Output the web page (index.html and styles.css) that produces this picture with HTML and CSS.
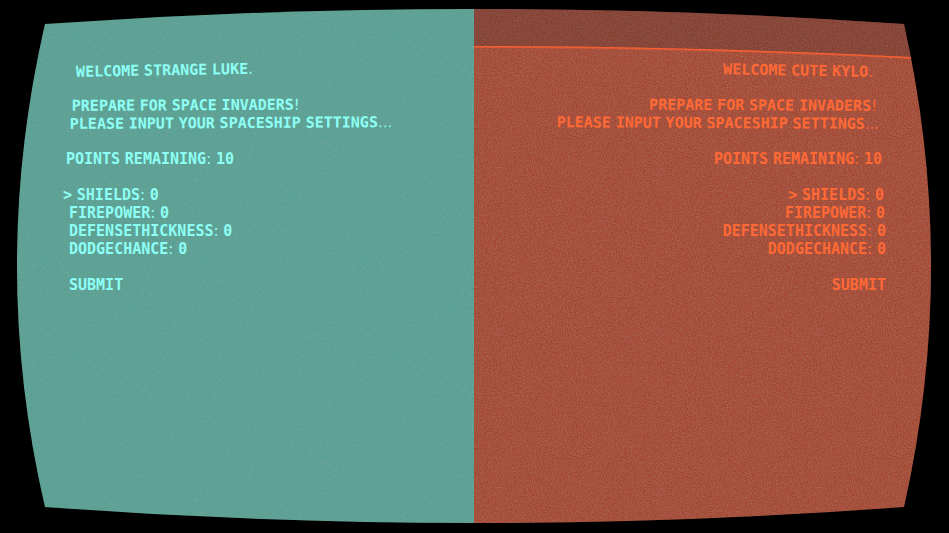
FILE: index.html
```
<!DOCTYPE html>
<html lang="en">
<head>
<meta charset="utf-8">
<title>Space Invaders</title>
<link rel="stylesheet" href="styles.css">
</head>
<body>
<svg class="defs" aria-hidden="true">
  <clipPath id="tube" clipPathUnits="objectBoundingBox">
    <path d="M.0474 .045 Q.5 -.0113 .9526 .045 Q1.0095 .5 .9526 .9512 Q.5 1.0113 .0474 .9512 Q-.0116 .5 .0474 .045Z"/>
  </clipPath>
</svg>
<main class="screen">
  <svg class="noise" aria-hidden="true">
    <filter id="grain" x="0" y="0" width="100%" height="100%" color-interpolation-filters="sRGB">
      <feTurbulence type="fractalNoise" baseFrequency=".8" numOctaves="2" seed="4"/>
      <feColorMatrix values="0 0 0 0 .66  0 0 0 0 .64  0 0 0 0 .66  .7 0 0 0 -.2"/>
    </filter>
    <rect width="100%" height="100%" filter="url(#grain)"/>
  </svg>
  <section class="pane luke">
    <div class="curve"></div>
    <p class="line tilt"><b>WELCOME</b> <b>STRANGE</b> <b>LUKE</b>.</p>
    <p class="line slight gap"><b>PREPARE</b> <b>FOR</b> <b>SPACE</b> <b>INVADERS</b>!</p>
    <p class="line slight"><b>PLEASE</b> <b>INPUT</b> <b>YOUR</b> <b>SPACESHIP</b> <b>SETTINGS</b>...</p>
    <p class="line gap"><b>POINTS</b> <b>REMAINING</b>: <b>10</b></p>
    <ul class="menu gap">
      <li><button type="button"><b>&gt;</b> <b>SHIELDS</b>: <b>0</b></button></li>
      <li class="item"><button type="button"><b>FIREPOWER</b>: <b>0</b></button></li>
      <li class="item"><button type="button"><b>DEFENSETHICKNESS</b>: <b>0</b></button></li>
      <li class="item"><button type="button"><b>DODGECHANCE</b>: <b>0</b></button></li>
      <li class="item gap"><button type="button"><b>SUBMIT</b></button></li>
    </ul>
  </section>
  <section class="pane kylo">
    <svg class="scan" viewBox="0 0 475 60" preserveAspectRatio="none" aria-hidden="true">
      <path class="band" d="M0 0H475V59Q237 46 0 46Z"/>
      <path class="glow" d="M0 47Q237 47 475 60"/>
      <path class="beam" d="M0 46.5Q237 46.5 475 59.5"/>
    </svg>
    <div class="curve"></div>
    <p class="line tilt"><b>WELCOME</b> <b>CUTE</b> <b>KYLO</b>.</p>
    <p class="line slight gap"><b>PREPARE</b> <b>FOR</b> <b>SPACE</b> <b>INVADERS</b>!</p>
    <p class="line slight"><b>PLEASE</b> <b>INPUT</b> <b>YOUR</b> <b>SPACESHIP</b> <b>SETTINGS</b>...</p>
    <p class="line gap"><b>POINTS</b> <b>REMAINING</b>: <b>10</b></p>
    <ul class="menu gap">
      <li><button type="button"><b>&gt;</b> <b>SHIELDS</b>: <b>0</b></button></li>
      <li><button type="button"><b>FIREPOWER</b>: <b>0</b></button></li>
      <li><button type="button"><b>DEFENSETHICKNESS</b>: <b>0</b></button></li>
      <li><button type="button"><b>DODGECHANCE</b>: <b>0</b></button></li>
      <li class="gap"><button type="button"><b>SUBMIT</b></button></li>
    </ul>
  </section>
</main>
</body>
</html>
```

FILE: styles.css
```
body {
  margin: 0;
  background: #000;
}

.defs {
  position: absolute;
  width: 0;
  height: 0;
}

.screen {
  --half: round(down, 50vw, 1px);
  position: relative;
  display: grid;
  grid-template-columns: var(--half) 1fr;
  min-height: 100vh;
  background: linear-gradient(90deg, #52a192 var(--half), #a5432b var(--half));
  clip-path: url(#tube);
  font: 15px/18px "DejaVu Sans", sans-serif;
}

.noise {
  position: absolute;
  inset: 0;
  width: 100%;
  height: 100%;
  pointer-events: none;
}

.pane {
  position: relative;
  padding: 60px 63px 0;
  white-space: nowrap;
}

.luke {
  color: #8efff4;
}

.kylo {
  color: #ff6935;
  text-align: right;
}

/* Bends the edge of the text along the tube */
.curve {
  float: left;
  width: 16px;
  height: 124px;
  shape-outside: polygon(0 0, 13px 0, 9px 34px, 7px 52px, 3px 88px, 1px 124px);
}

.kylo .curve {
  float: right;
  height: 160px;
  shape-outside: polygon(16px 0, 3px 0, 7px 34px, 9px 52px, 12px 88px, 14px 124px, 16px 160px);
}

b {
  font-family: "DejaVu Sans Mono", monospace;
  font-weight: bold;
}

.line {
  margin: 0;
}

.gap {
  margin-top: 18px;
}

.luke .tilt {
  transform: rotate(-1deg);
}

.luke .slight {
  transform: rotate(-0.3deg);
}

.kylo .tilt {
  transform: rotate(1deg);
}

.kylo .slight {
  transform: rotate(0.3deg);
}

.menu {
  padding: 0;
  margin-bottom: 0;
  list-style: none;
}

.luke .item {
  padding-left: 6px;
}

.menu button {
  padding: 0;
  border: 0;
  background: none;
  color: inherit;
  font: inherit;
  vertical-align: top;
}

.scan {
  position: absolute;
  top: 0;
  left: 0;
  width: 100%;
  height: 60px;
}

.band {
  fill: rgb(30 35 45 / 0.22);
}

.glow {
  fill: none;
  stroke: rgb(255 96 53 / 0.5);
  stroke-width: 2;
}

.beam {
  fill: none;
  stroke: #f8602f;
  stroke-width: 1;
}
```
